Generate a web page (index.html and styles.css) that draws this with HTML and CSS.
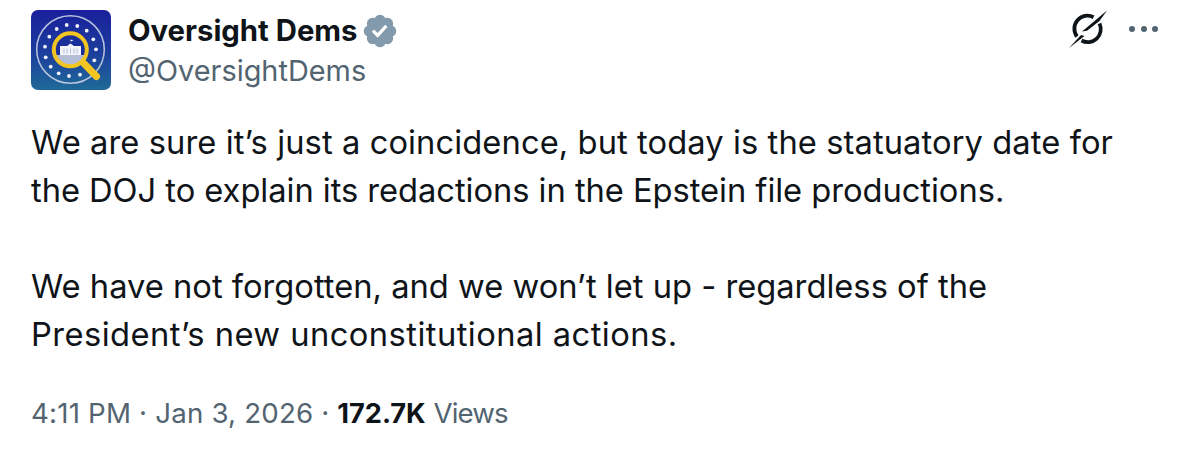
FILE: index.html
```html
<!DOCTYPE html>
<html lang="en">
<head>
<meta charset="utf-8">
<title>Oversight Dems</title>
<link rel="stylesheet" href="styles.css">
</head>
<body>
<article class="tweet">
  <header class="head">
    <svg class="avatar" viewBox="0 0 80 80" role="img" aria-label="Oversight Dems logo">
      <defs>
        <linearGradient id="bg" x1="0" y1="0" x2="0" y2="1">
          <stop offset="0" stop-color="#1a1f9c"/>
          <stop offset="0.55" stop-color="#1c3f9c"/>
          <stop offset="1" stop-color="#1f6a98"/>
        </linearGradient>
      </defs>
      <rect width="80" height="80" rx="7" fill="url(#bg)"/>
      <circle cx="39.500" cy="39.500" r="33.800" fill="none" stroke="#b9c4dd" stroke-width="1.500"/>
      <g fill="#eef1f8">
        <circle cx="35.700" cy="15" r="1.900"/><circle cx="46.300" cy="16" r="1.900"/><circle cx="25.700" cy="19" r="1.900"/>
        <circle cx="55.700" cy="20.700" r="1.900"/><circle cx="18.300" cy="26.700" r="1.900"/><circle cx="62.300" cy="29.300" r="1.900"/>
        <circle cx="14" cy="36.700" r="1.900"/><circle cx="65" cy="39.300" r="1.900"/><circle cx="14.700" cy="47.300" r="1.900"/>
        <circle cx="63.300" cy="50.300" r="1.900"/><circle cx="19.700" cy="56.700" r="1.900"/><circle cx="27.700" cy="63.300" r="1.900"/>
        <circle cx="38" cy="66" r="1.900"/><circle cx="49" cy="64.700" r="1.900"/>
      </g>
      <circle cx="39.300" cy="39.800" r="16.500" fill="#1b2f9b"/>
      <path d="M25.500 45h28q-1.500 10-14 11q-12.500-1-14-11z" fill="#b3bdd6"/>
      <path d="M29 36h7l3.500-2.500 3.500 2.500h7v9H29z" fill="#f2f4fa"/>
      <path d="M39.500 33.500v-4l3 1-3 1" fill="#f2f4fa"/>
      <path d="M33 38.500v5M36 38.500v5M39.500 38.500v5M43 38.500v5M46 38.500v5" stroke="#a4b0d0" stroke-width=".8"/>
      <circle cx="39.300" cy="39.800" r="16.500" fill="none" stroke="#f2c522" stroke-width="4"/>
      <path d="M53 53.500l12.500 13" stroke="#f2c522" stroke-width="7" stroke-linecap="round"/>
    </svg>
    <div class="who">
      <div class="name-row">
        <span class="name">Oversight Dems</span>
        <svg class="badge" viewBox="0 0 22 22" aria-label="Verified account"><path fill="#829aab" d="M20.396 11c-.018-.646-.215-1.275-.57-1.816-.354-.54-.852-.972-1.438-1.246.223-.607.27-1.264.14-1.897-.131-.634-.437-1.218-.882-1.687-.47-.445-1.053-.75-1.687-.882-.633-.13-1.29-.083-1.897.14-.273-.587-.704-1.086-1.245-1.44S11.647 1.62 11 1.604c-.646.017-1.273.213-1.813.568s-.969.854-1.24 1.44c-.608-.223-1.267-.272-1.902-.14-.635.13-1.22.436-1.69.882-.445.47-.749 1.055-.878 1.688-.13.633-.08 1.29.144 1.896-.587.274-1.087.705-1.443 1.245-.356.54-.555 1.17-.574 1.817.02.647.218 1.276.574 1.817.356.54.856.972 1.443 1.245-.224.606-.274 1.263-.144 1.896.13.634.433 1.218.877 1.688.47.443 1.054.747 1.687.878.633.132 1.29.084 1.897-.136.274.586.705 1.084 1.246 1.439.54.354 1.17.551 1.816.569.647-.016 1.276-.213 1.817-.567s.972-.854 1.245-1.44c.604.239 1.266.296 1.903.164.636-.132 1.22-.447 1.68-.907.46-.46.776-1.044.908-1.681s.075-1.299-.165-1.903c.586-.274 1.084-.705 1.439-1.246.354-.54.551-1.17.569-1.816z"/><path fill="#fff" d="M9.662 14.85l-3.429-3.428 1.293-1.302 2.072 2.072 4.4-4.794 1.347 1.246z"/></svg>
      </div>
      <div class="handle">@OversightDems</div>
    </div>
    <div class="actions">
      <svg class="grok" viewBox="0 0 40 40" aria-hidden="true">
        <path d="M25.500 8.200A13 13 0 0 0 9 27.500" fill="none" stroke="#0f1419" stroke-width="3.800"/>
        <path d="M13.500 31.500A13 13 0 0 0 31.500 14.500" fill="none" stroke="#0f1419" stroke-width="3.800"/>
        <path d="M39 1.500L14 22.500l5-.800L31.500 12z" fill="#0f1419"/>
        <path d="M1 39L13 26l3.500 1z" fill="#0f1419"/>
      </svg>
      <div class="dots" aria-label="More"><i></i><i></i><i></i></div>
    </div>
  </header>
  <div class="body">
    <p><span class="line-a">We are sure it’s just a coincidence, but today is the statuatory date for</span><br><span class="line-b">the DOJ to explain its redactions in the Epstein file productions.</span></p>
    <p>We have not forgotten, and we won’t let up - regardless of the<br><span class="line-d">President’s new unconstitutional actions.</span></p>
  </div>
  <footer class="meta"><span class="stamp">4:11 PM · Jan 3, 2026 ·</span> <b>172.7K</b> <span class="views">Views</span></footer>
</article>
</body>
</html>
```
FILE: styles.css
```css
* { box-sizing: border-box; }
html, body { margin: 0; padding: 0; background: #fff; }
body { width: 1190px; height: 464px; overflow: hidden; font-family: Inter, "Liberation Sans", sans-serif; color: #0f1419; }
.tweet { padding: 10px 32px 0 31px; }
.head { display: flex; align-items: flex-start; }
.avatar { width: 80px; height: 80px; display: block; flex: none; }
.who { margin-left: 17px; padding-top: 1px; flex: 1; }
.name-row { display: flex; align-items: center; height: 40px; }
.name { font-size: 29.300px; font-weight: 700; line-height: 40px; }
.badge { width: 38px; height: 38px; margin-left: 3px; }
.handle { font-size: 28.900px; line-height: 40px; color: #536471; }
.actions { display: flex; align-items: flex-start; margin-top: -1px; }
.grok { width: 40px; height: 40px; display: block; margin-right: 21px; }
.dots { display: flex; gap: 5.500px; margin-top: 17px; }
.dots i { width: 6px; height: 6px; border-radius: 50%; background: #536471; display: block; }
.body { margin-top: 27px; font-size: 32.700px; line-height: 48px; }
.body p { margin: 0 0 48px; }
.body p:last-child { margin-bottom: 0; }
.line-a { letter-spacing: 0.08px; }
.line-b { letter-spacing: -0.05px; }
.line-d { letter-spacing: 0.44px; }
.meta { margin-top: 35px; font-size: 27.700px; line-height: 40px; color: #536471; }
.meta b { color: #0f1419; font-weight: 700; font-size: 27.200px; }
.stamp { letter-spacing: 0.18px; }
.views { letter-spacing: -0.9px; }
```
